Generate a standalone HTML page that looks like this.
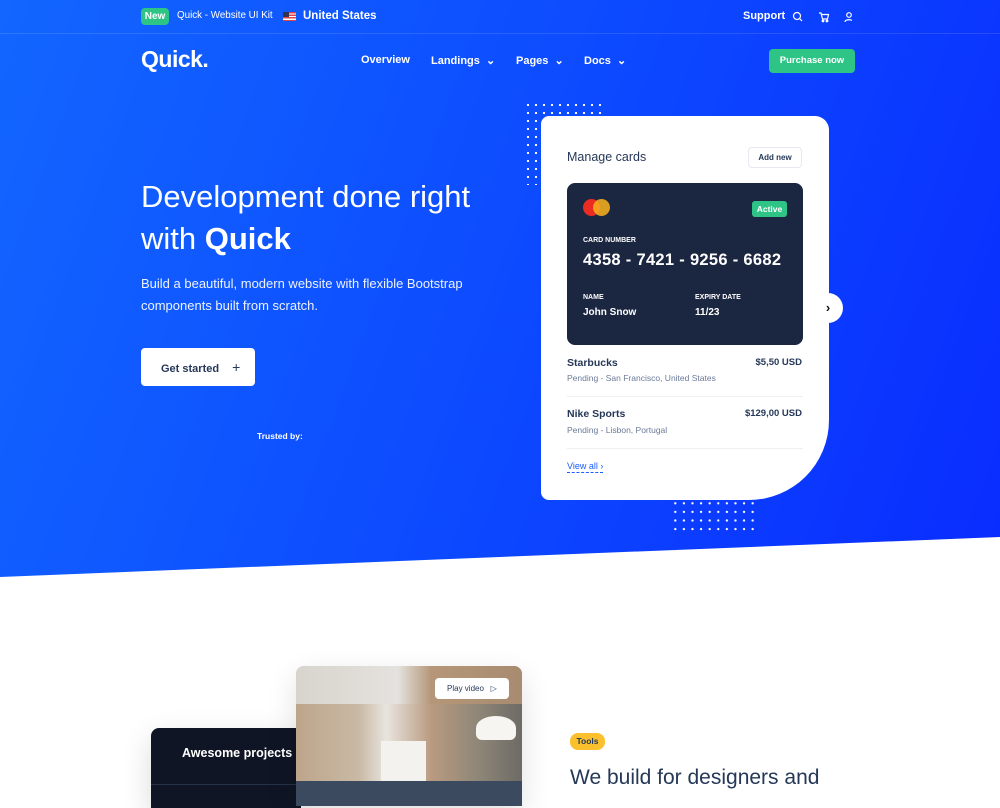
<!DOCTYPE html>
<html><head><meta charset="utf-8">
<style>
*{box-sizing:border-box;margin:0;padding:0}
body{width:1000px;height:800px;overflow:hidden;font-family:"Liberation Sans",sans-serif;background:#fff;position:relative}
.hero{position:absolute;left:0;top:0;width:1000px;height:580px;background:linear-gradient(110deg,#1366ff 0%,#0d4eff 45%,#0a2cff 100%);clip-path:polygon(0 0,1000px 0,1000px 537px,0 577px)}
.abs{position:absolute}
.w{color:#fff}
.topline{position:absolute;left:0;top:33px;width:1000px;height:1px;background:rgba(255,255,255,.12)}
.dots{position:absolute;background-image:radial-gradient(circle,#fff 1px,transparent 1.3px)}
.card{position:absolute;left:541px;top:116px;width:288px;height:384px;background:#fff;border-radius:8px 14px 80px 8px}
.navy{color:#253858}
</style></head><body>
<div class="hero"></div>
<div class="topline"></div>
<div class="abs" style="left:141px;top:8px;width:28px;height:17px;background:#2ec486;border-radius:4px;color:#fff;font-size:10px;font-weight:bold;text-align:center;line-height:17px">New</div>
<div class="abs w" style="left:177px;top:10px;font-size:9.8px">Quick - Website UI Kit</div>
<div class="abs" style="left:283px;top:12px;width:13px;height:9px;background:repeating-linear-gradient(#d44 0 1.3px,#fff 1.3px 2.6px)"><div style="width:6px;height:5px;background:#335"></div></div>
<div class="abs w" style="left:303px;top:10px;font-size:11.5px;font-weight:bold">United States</div>
<div class="abs w" style="left:743px;top:10px;font-size:11px;font-weight:bold">Support</div>
<svg class="abs" style="left:792px;top:11px" width="60" height="12" fill="none" stroke="#fff" stroke-width="1.2"><circle cx="5" cy="5" r="3.5"/><path d="M7.5 7.5l2.5 2.5"/><path d="M27 2h2l1.5 6h5l1-4.5h-7"/><circle cx="31" cy="10" r=".8"/><circle cx="35" cy="10" r=".8"/><circle cx="57" cy="4" r="2.3"/><path d="M53 11c0-3 8-3 8 0"/></svg>
<div class="abs w" style="left:141px;top:46px;font-size:23px;font-weight:bold;letter-spacing:-.5px">Quick.</div>
<div class="abs w" style="left:361px;top:54px;font-size:11px;font-weight:bold">Overview</div>
<div class="abs w" style="left:431px;top:54px;font-size:11px;font-weight:bold">Landings &nbsp;⌄</div>
<div class="abs w" style="left:516px;top:54px;font-size:11px;font-weight:bold">Pages &nbsp;⌄</div>
<div class="abs w" style="left:584px;top:54px;font-size:11px;font-weight:bold">Docs &nbsp;⌄</div>
<div class="abs" style="left:769px;top:49px;width:86px;height:24px;background:#2ec486;border-radius:4px;color:#fff;font-size:9.5px;font-weight:bold;text-align:center;line-height:24px">Purchase now</div>
<div class="abs w" style="left:141px;top:176px;font-size:31px;line-height:42px">Development done right<br>with <b>Quick</b></div>
<div class="abs w" style="left:141px;top:273px;font-size:13px;line-height:22px;opacity:.92">Build a beautiful, modern website with flexible Bootstrap<br>components built from scratch.</div>
<div class="abs" style="left:141px;top:348px;width:114px;height:38px;background:#fff;border-radius:4px;color:#253858;font-size:11px;font-weight:bold;line-height:38px;padding-left:20px">Get started <span style="margin-left:10px;font-size:14px;font-weight:normal">+</span></div>
<div class="abs w" style="left:257px;top:431px;font-size:8.5px;font-weight:bold">Trusted by:</div>
<div class="dots" style="left:524px;top:101px;width:80px;height:84px;background-size:8px 8px"></div>
<div class="dots" style="left:671px;top:499px;width:88px;height:36px;background-size:8.6px 8.6px"></div>
<div class="card">
<div class="abs navy" style="left:26px;top:34px;font-size:12.5px">Manage cards</div>
<div class="abs" style="left:207px;top:31px;width:54px;height:21px;border:1px solid #e6e9ef;border-radius:4px;font-size:8px;font-weight:bold;color:#253858;text-align:center;line-height:19px">Add new</div>
<div class="abs" style="left:26px;top:67px;width:236px;height:162px;background:#1b2640;border-radius:8px">
<div class="abs" style="left:16px;top:16px;width:17px;height:17px;border-radius:50%;background:#eb2c22"></div>
<div class="abs" style="left:26px;top:16px;width:17px;height:17px;border-radius:50%;background:#f9b31c;opacity:.85"></div>
<div class="abs" style="left:185px;top:18px;width:35px;height:16px;background:#2ec486;border-radius:3px;color:#fff;font-size:8.5px;font-weight:bold;text-align:center;line-height:16px">Active</div>
<div class="abs w" style="left:16px;top:54px;font-size:7px;font-weight:bold">CARD NUMBER</div>
<div class="abs w" style="left:16px;top:68px;font-size:16.5px;font-weight:bold;letter-spacing:.3px">4358 - 7421 - 9256 - 6682</div>
<div class="abs w" style="left:16px;top:111px;font-size:7px;font-weight:bold">NAME</div>
<div class="abs w" style="left:16px;top:124px;font-size:10px;font-weight:bold">John Snow</div>
<div class="abs w" style="left:128px;top:111px;font-size:7px;font-weight:bold">EXPIRY DATE</div>
<div class="abs w" style="left:128px;top:124px;font-size:10px;font-weight:bold">11/23</div>
</div>
<div class="abs navy" style="left:26px;top:241px;font-size:10.5px;font-weight:bold">Starbucks</div>
<div class="abs navy" style="right:27px;top:241px;font-size:9.5px;font-weight:bold">$5,50 USD</div>
<div class="abs" style="left:26px;top:257px;font-size:8.5px;color:#6b7a99">Pending - San Francisco, United States</div>
<div class="abs" style="left:26px;top:280px;width:236px;height:1px;background:#eef0f4"></div>
<div class="abs navy" style="left:26px;top:292px;font-size:10.5px;font-weight:bold">Nike Sports</div>
<div class="abs navy" style="right:27px;top:292px;font-size:9.5px;font-weight:bold">$129,00 USD</div>
<div class="abs" style="left:26px;top:309px;font-size:8.5px;color:#6b7a99">Pending - Lisbon, Portugal</div>
<div class="abs" style="left:26px;top:332px;width:236px;height:1px;background:#eef0f4"></div>
<div class="abs" style="left:26px;top:345px;font-size:9px;color:#1a5cff;border-bottom:1px dashed #1a5cff;padding-bottom:1px">View all ›</div>
</div>
<div class="abs" style="left:813px;top:293px;width:30px;height:30px;border-radius:50%;background:#fff;font-size:13px;font-weight:bold;text-align:center;line-height:29px;color:#111">›</div>
<div class="abs" style="left:151px;top:728px;width:150px;height:80px;background:#0f1524;border-radius:8px 0 0 0;box-shadow:0 10px 30px rgba(0,0,0,.15)">
<div class="abs w" style="left:31px;top:18px;font-size:12.5px;font-weight:bold">Awesome projects</div>
<div class="abs" style="left:0;top:56px;width:150px;height:1px;background:#26324a"></div>
</div>
<div class="abs" style="left:296px;top:666px;width:226px;height:140px;border-radius:8px 8px 0 0;overflow:hidden;background:linear-gradient(90deg,#bda58a 0%,#c9b9a5 28%,#e8e5df 40%,#b99a80 60%,#8f8778 80%,#6d6a66 100%);box-shadow:0 10px 30px rgba(0,0,0,.12)">
<div class="abs" style="left:0;top:0;width:226px;height:38px;background:linear-gradient(90deg,#d8d4cd,#e4e2de 45%,#b59678 60%,#a88b70)"></div>
<div class="abs" style="left:85px;top:75px;width:45px;height:45px;background:#f3f2ef"></div>
<div class="abs" style="left:180px;top:50px;width:40px;height:24px;border-radius:50% 50% 6px 6px;background:#f7f5f1"></div>
<div class="abs" style="left:0;top:115px;width:226px;height:30px;background:#3b4a5e"></div>
<div class="abs" style="left:139px;top:12px;width:74px;height:21px;background:#fff;border-radius:4px;font-size:8px;color:#253858;line-height:21px;padding-left:12px">Play video &nbsp;&nbsp;▷</div>
</div>
<div class="abs" style="left:570px;top:733px;width:35px;height:17px;background:#fbc02d;border-radius:8px;font-size:8.5px;font-weight:bold;color:#253858;text-align:center;line-height:17px">Tools</div>
<div class="abs navy" style="left:570px;top:766px;font-size:21px">We build for designers and</div>
</body></html>
